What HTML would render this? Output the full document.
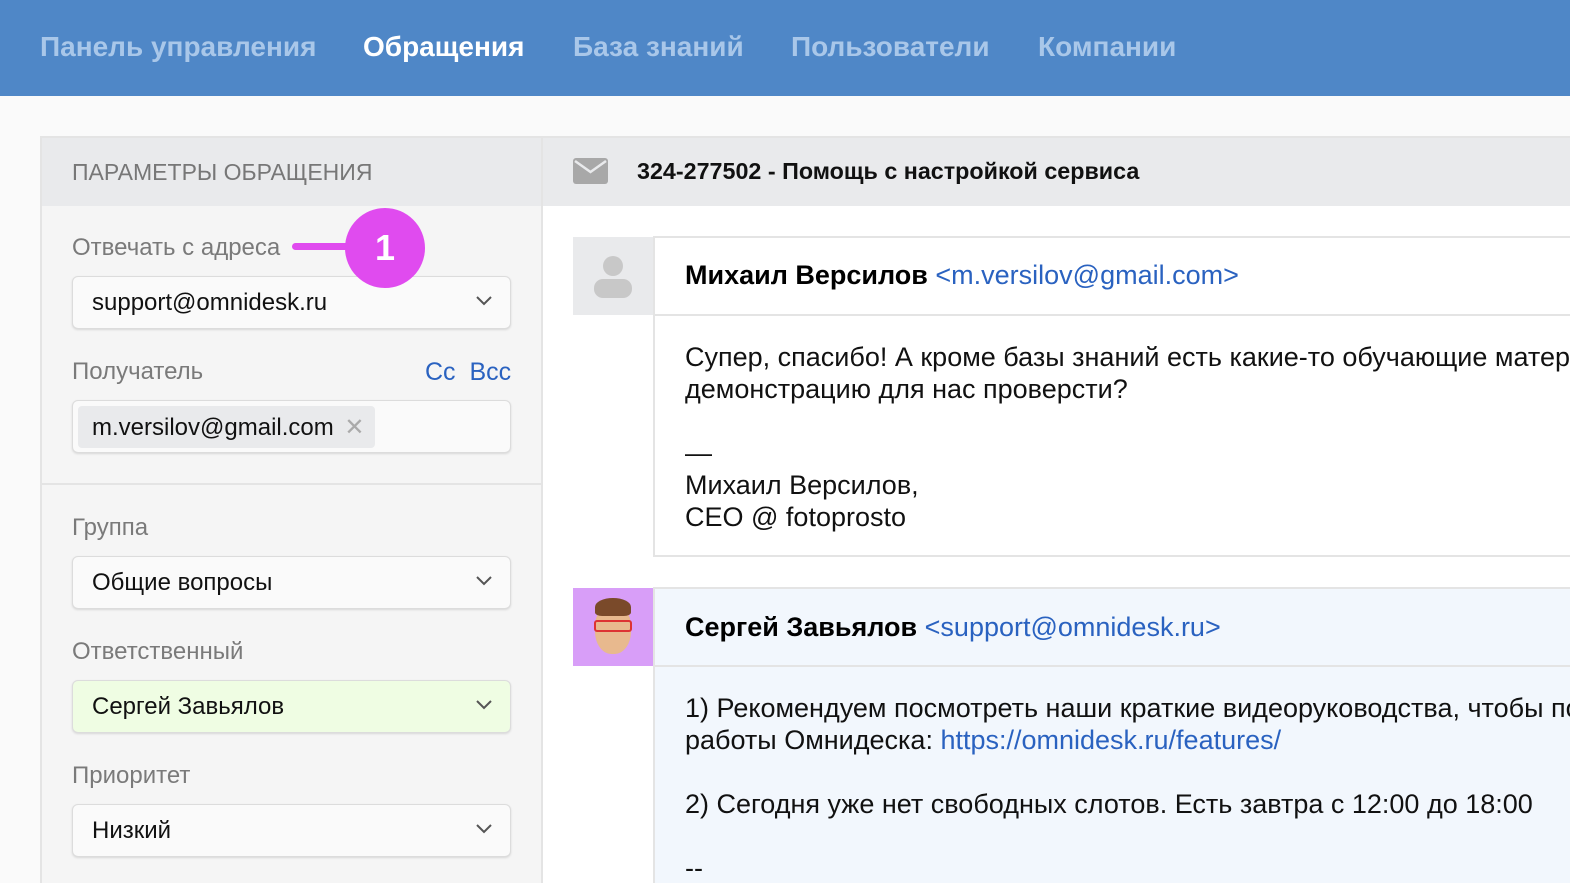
<!DOCTYPE html>
<html><head><meta charset="utf-8"><style>
*{box-sizing:border-box;margin:0;padding:0}
html,body{width:1570px;height:883px;overflow:hidden}
body{background:#fafafa;font-family:"Liberation Sans",Arial,sans-serif;position:relative}
.a{position:absolute;white-space:nowrap}
.nav{left:0;top:0;width:1570px;height:96px;background:#4f87c7}
.nl{top:31px;font-size:28px;font-weight:bold;color:#a9c7e9}
.lp{left:40px;top:136px;width:503px;height:747px;background:#f5f5f5;border:2px solid #e4e4e4;border-bottom:none}
.lbl{font-size:24px;color:#7a7a7a}
.inp{left:72px;width:439px;height:53px;background:#fafafa;border:1px solid #dcdcdc;border-radius:6px;box-shadow:0 1px 2px rgba(0,0,0,.12);font-size:24px;color:#111;padding:12px 0 0 19px}
.chev{position:absolute;right:18px;top:19px;width:16px;height:10px}
.txt{font-size:27px;color:#111;line-height:32px}
a{color:#2a62c0;text-decoration:none}
</style></head><body>
<div class="a nav"></div>
<div class="a nl" style="left:40px">Панель управления</div>
<div class="a nl" style="left:363px;color:#fff">Обращения</div>
<div class="a nl" style="left:573px">База знаний</div>
<div class="a nl" style="left:791px">Пользователи</div>
<div class="a nl" style="left:1038px">Компании</div>

<div class="a lp"></div>
<div class="a" style="left:42px;top:138px;width:499px;height:68px;background:#e9eaec"></div>
<div class="a" style="left:72px;top:159px;font-size:23px;color:#777">ПАРАМЕТРЫ ОБРАЩЕНИЯ</div>
<div class="a lbl" style="left:72px;top:234px">Отвечать с адреса</div>
<div class="a inp" style="top:276px">support@omnidesk.ru<svg class="chev" viewBox="0 0 16 10"><path d="M1 1l7 7 7-7" fill="none" stroke="#555" stroke-width="2"/></svg></div>
<div class="a" style="left:292px;top:243px;width:60px;height:7px;background:#e04bef;border-radius:4px"></div>
<div class="a" style="left:345px;top:208px;width:80px;height:80px;border-radius:50%;background:#e04bef;color:#fff;font-size:36px;font-weight:bold;text-align:center;line-height:80px">1</div>
<div class="a lbl" style="left:72px;top:358px">Получатель</div>
<div class="a" style="left:425px;top:358px;font-size:25px;color:#2a62c0">Cc&nbsp; Bcc</div>
<div class="a inp" style="top:400px;padding:5px"><div style="display:inline-block;background:#e9eaec;border-radius:4px;height:42px;padding:7px 10px 0 14px;font-size:24px">m.versilov@gmail.com <span style="color:#aaa;margin-left:4px">✕</span></div></div>
<div class="a" style="left:42px;top:483px;width:499px;height:2px;background:#e4e4e4"></div>
<div class="a lbl" style="left:72px;top:514px">Группа</div>
<div class="a inp" style="top:556px">Общие вопросы<svg class="chev" viewBox="0 0 16 10"><path d="M1 1l7 7 7-7" fill="none" stroke="#555" stroke-width="2"/></svg></div>
<div class="a lbl" style="left:72px;top:638px">Ответственный</div>
<div class="a inp" style="top:680px;background:#effde3">Сергей Завьялов<svg class="chev" viewBox="0 0 16 10"><path d="M1 1l7 7 7-7" fill="none" stroke="#555" stroke-width="2"/></svg></div>
<div class="a lbl" style="left:72px;top:762px">Приоритет</div>
<div class="a inp" style="top:804px">Низкий<svg class="chev" viewBox="0 0 16 10"><path d="M1 1l7 7 7-7" fill="none" stroke="#555" stroke-width="2"/></svg></div>

<div class="a" style="left:543px;top:136px;width:1027px;height:747px;background:#fff;border-top:2px solid #e4e4e4"></div>
<div class="a" style="left:543px;top:138px;width:1027px;height:68px;background:#e9eaec"></div>
<svg class="a" style="left:573px;top:158px" width="35" height="26" viewBox="0 0 35 26"><rect width="35" height="26" rx="3" fill="#a8a8a8"/><path d="M2 3l15.5 11L33 3" fill="none" stroke="#e9eaec" stroke-width="2.5"/></svg>
<div class="a" style="left:637px;top:158px;font-size:23.3px;font-weight:bold;color:#111">324-277502 - Помощь с настройкой сервиса</div>

<div class="a" style="left:573px;top:237px;width:80px;height:78px;background:#e9eaec"></div>
<svg class="a" style="left:593px;top:252px" width="40" height="46" viewBox="0 0 40 46"><circle cx="20" cy="14" r="10" fill="#c8c8c8"/><rect x="1" y="27" width="38" height="19" rx="9" fill="#c8c8c8"/></svg>
<div class="a" style="left:653px;top:236px;width:930px;height:321px;border:2px solid #e4e4e4;border-right:none"></div>
<div class="a" style="left:655px;top:314px;width:915px;height:2px;background:#e4e4e4"></div>
<div class="a" style="left:685px;top:260px;font-size:27px"><b>Михаил Версилов</b> <a>&lt;m.versilov@gmail.com&gt;</a></div>
<div class="a txt" style="left:685px;top:341px">Супер, спасибо! А кроме базы знаний есть какие-то обучающие материалы или<br>демонстрацию для нас проверсти?<br><br>—<br>Михаил Версилов,<br>CEO @ fotoprosto</div>

<div class="a" style="left:573px;top:588px;width:80px;height:78px;background:#d89ef8"></div>
<div class="a" style="left:595px;top:604px;width:36px;height:50px;border-radius:45%;background:#e8b98e"></div>
<div class="a" style="left:595px;top:598px;width:36px;height:18px;border-radius:50% 50% 20% 20%;background:#7a4a2a"></div>
<div class="a" style="left:594px;top:620px;width:38px;height:12px;border:2px solid #d33;border-radius:3px"></div>
<div class="a" style="left:653px;top:587px;width:930px;height:300px;border:2px solid #e4e4e4;border-right:none;background:#f2f7fd"></div>
<div class="a" style="left:655px;top:665px;width:915px;height:2px;background:#e4e4e4"></div>
<div class="a" style="left:685px;top:612px;font-size:27px"><b>Сергей Завьялов</b> <a>&lt;support@omnidesk.ru&gt;</a></div>
<div class="a txt" style="left:685px;top:692px">1) Рекомендуем посмотреть наши краткие видеоруководства, чтобы понять принципы<br>работы Омнидеска: <a>https://omnidesk.ru/features/</a><br><br>2) Сегодня уже нет свободных слотов. Есть завтра с 12:00 до 18:00<br><br>--</div>
</body></html>
